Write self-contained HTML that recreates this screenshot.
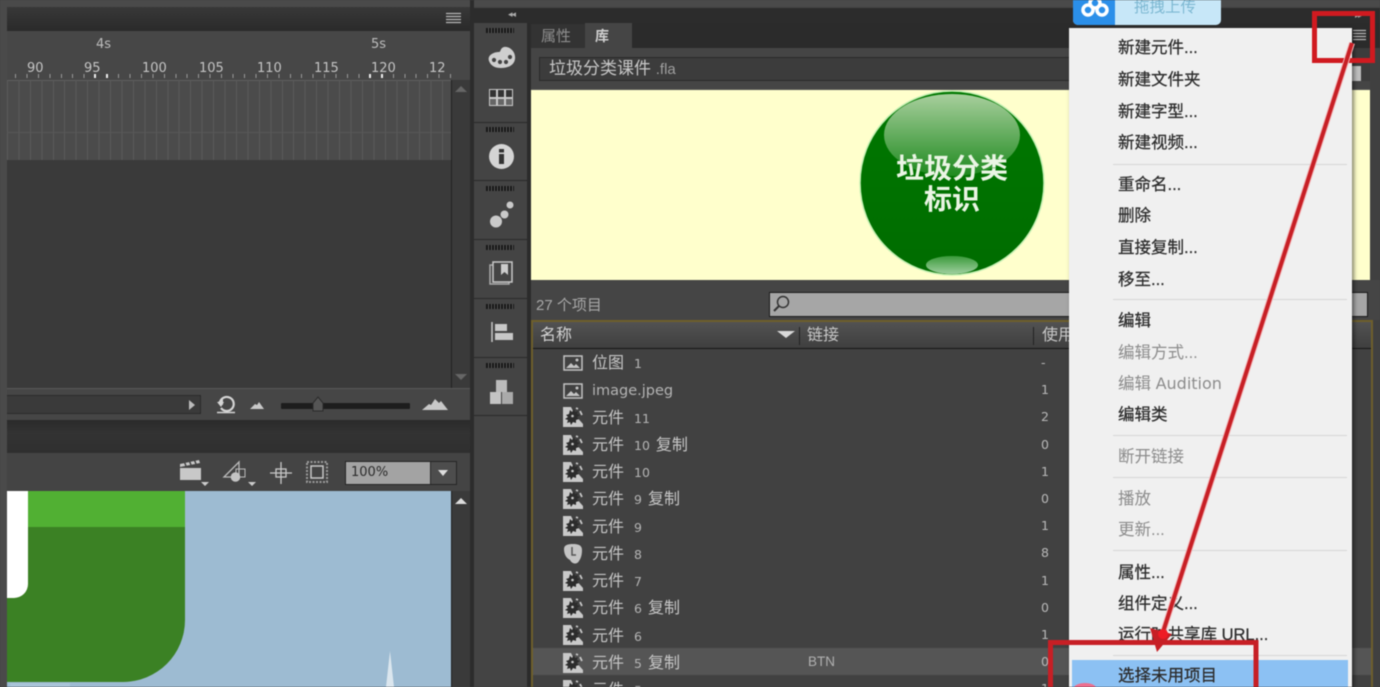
<!DOCTYPE html>
<html><head><meta charset="utf-8">
<style>
html,body{margin:0;padding:0;background:#3f3f3f}
#p{position:relative;width:1380px;height:687px;overflow:hidden;background:#444;font-family:"Liberation Sans","Noto Sans CJK SC",sans-serif;color:#c8c8c8;filter:blur(.4px)}
.a{position:absolute}
.t{position:absolute;white-space:nowrap;line-height:1}
.rul{font-family:"DejaVu Sans",sans-serif;font-size:13px;color:#c4c4c4;top:62px}
.grip{position:absolute;left:486px;width:28px;height:5px;background:repeating-linear-gradient(90deg,#161616 0 2px,#555 2px 3px)}
.sep{position:absolute;left:474px;width:53px;height:1px;background:#2a2a2a}
.rw{position:absolute;left:592px;font-size:16px;color:#c6c6c6;white-space:nowrap;line-height:18px;font-family:"Liberation Sans","Noto Sans CJK SC",sans-serif}
.rw b{font-weight:400;font-family:"DejaVu Sans",sans-serif;font-size:12.5px;color:#b4b4b4;margin:0 6px 0 10px}
.n{position:absolute;left:1041px;font-family:"DejaVu Sans",sans-serif;font-size:12.5px;color:#b8b8b8;line-height:14px}
.ic{position:absolute;left:563px;width:20px;height:20px}
.m{position:absolute;left:1118px;font-size:16.5px;line-height:20px;color:#2c2c2c;white-space:nowrap;-webkit-text-stroke:.25px #2c2c2c}
.d{color:#8c8c8c;-webkit-text-stroke:0}
.s{position:absolute;left:1113px;width:234px;height:1px;background:#d6d6d6}
</style></head><body><div id="p">
<svg width="0" height="0" style="position:absolute">
<defs>
<symbol id="g" viewBox="0 0 20 20"><path d="M0 0H8L12 8 20 17V20H0Z" fill="#c9c9c9"/><path d="M7 3l2 2 2-3 1 3 3-1-1 3 3 1-3 2 2 2-3 1 0 3-3-1-2 3-1-3-3 1 1-3-3-1 3-2-2-2 3-1z" fill="#2c2c2c"/><circle cx="9.500" cy="9" r="1.300" fill="#c9c9c9"/><path d="M13 1L15 2M17 4L19 8" stroke="#c9c9c9" stroke-width="1.800" fill="none"/></symbol>
<symbol id="im" viewBox="0 0 20 16"><rect x="1" y="1" width="18" height="14" fill="none" stroke="#c4c4c4" stroke-width="1.500"/><path d="M3 13L8 8l3 3 2-2 4 4Z" fill="#c4c4c4"/><circle cx="14" cy="5" r="1.500" fill="#c4c4c4"/></symbol>
</defs>
</svg>

<!-- top strip -->
<div class="a" style="left:0;top:0;width:1380px;height:7px;background:#4a4a4a"></div>
<div class="a" style="left:0;top:7px;width:7px;height:680px;background:#4a4a4a"></div>

<!-- timeline panel -->
<div class="a" style="left:7px;top:7px;width:463px;height:24px;background:linear-gradient(#383838,#2a2a2a)"></div>
<svg class="a" style="left:446px;top:12px" width="16" height="13"><path d="M0 1.500H15M0 4.500H15M0 7.500H15M0 10.500H15" stroke="#b9b9b9" stroke-width="1.200"/></svg>
<div class="a" style="left:7px;top:31px;width:463px;height:49px;background:#474747"></div>
<div class="t" style="left:96px;top:38px;font-family:'DejaVu Sans',sans-serif;font-size:13px;color:#bdbdbd">4s</div>
<div class="t" style="left:371px;top:38px;font-family:'DejaVu Sans',sans-serif;font-size:13px;color:#bdbdbd">5s</div>
<div class="t rul" style="left:27px">90</div>
<div class="t rul" style="left:84px">95</div>
<div class="t rul" style="left:142px">100</div>
<div class="t rul" style="left:199px">105</div>
<div class="t rul" style="left:257px">110</div>
<div class="t rul" style="left:314px">115</div>
<div class="t rul" style="left:371px">120</div>
<div class="t rul" style="left:429px">12</div>
<div class="a" style="left:15px;top:74px;width:436px;height:4px;background:repeating-linear-gradient(90deg,#9a9a9a 0 1px,transparent 1px 11.45px)"></div>
<div class="a" style="left:94px;top:74px;width:2px;height:4px;background:#eee"></div>
<div class="a" style="left:106px;top:74px;width:2px;height:4px;background:#eee"></div>
<div class="a" style="left:369px;top:74px;width:2px;height:4px;background:#eee"></div>
<div class="a" style="left:381px;top:74px;width:2px;height:4px;background:#eee"></div>
<div class="a" style="left:7px;top:80px;width:444px;height:1px;background:#5e5e5e"></div>
<div class="a" style="left:7px;top:81px;width:444px;height:79px;background:repeating-linear-gradient(90deg,#5b5b5b 0 1px,#4b4b4b 1px 11.45px)"></div>
<div class="a" style="left:7px;top:132px;width:444px;height:1px;background:#575757"></div>
<div class="a" style="left:7px;top:160px;width:463px;height:228px;background:#3a3a3a"></div>
<div class="a" style="left:451px;top:80px;width:19px;height:308px;background:#3a3a3a;border-left:1px solid #222;box-sizing:border-box"></div>
<div class="a" style="left:455px;top:86px;width:0;height:0;border:6px solid transparent;border-bottom:6px solid #666;border-top:0"></div>
<div class="a" style="left:455px;top:374px;width:0;height:0;border:6px solid transparent;border-top:6px solid #666;border-bottom:0"></div>

<!-- controls -->
<div class="a" style="left:7px;top:388px;width:463px;height:32px;background:#464646;border-top:1px solid #585858;box-sizing:border-box"></div>
<div class="a" style="left:7px;top:395px;width:194px;height:19px;background:#3a3a3a;border:1px solid #2a2a2a;border-left:0;box-sizing:border-box"></div>
<div class="a" style="left:189px;top:400px;width:0;height:0;border:5px solid transparent;border-left:6px solid #bbb;border-right:0"></div>
<svg class="a" style="left:214px;top:394px" width="26" height="22"><path d="M6 8a7 7 0 1 1 1 6" fill="none" stroke="#d4d4d4" stroke-width="2.200"/><path d="M3 8h7l-3 5z M9 5v6l-5-3z" fill="#d4d4d4"/><path d="M3 18.500H21" stroke="#d4d4d4" stroke-width="1.500"/></svg>
<svg class="a" style="left:249px;top:400px" width="16" height="10"><path d="M1 9L6 4 8 5 10 2 15 9Z" fill="#c8c8c8"/></svg>
<div class="a" style="left:281px;top:403px;width:129px;height:6px;background:#1d1d1d;border-radius:1px"></div>
<svg class="a" style="left:311px;top:396px" width="14" height="17"><path d="M2 15V7L7 1 12 7V15Z" fill="#555" stroke="#2a2a2a"/></svg>
<svg class="a" style="left:421px;top:398px" width="28" height="14"><path d="M1 12L8 6 10 7 14 1 18 5 20 3 27 12Z" fill="#c8c8c8"/></svg>

<div class="a" style="left:7px;top:420px;width:463px;height:33px;background:linear-gradient(#2a2a2a,#333 40%,#2f2f2f)"></div>
<div class="a" style="left:7px;top:453px;width:463px;height:38px;background:#444"></div>
<svg class="a" style="left:178px;top:459px" width="34" height="28"><path d="M2 9H23V21H2Z" fill="#c8c8c8"/><path d="M2 8L22 4 21 1 2 5Z" fill="#c8c8c8"/><path d="M6 2l2 5M11 1l2 5M16 0l2 5" stroke="#444" stroke-width="1.500"/><path d="M23 23h8l-4 4z" fill="#ccc"/></svg>
<svg class="a" style="left:222px;top:459px" width="38" height="28"><path d="M2 18L17 3V18Z" fill="none" stroke="#bbb" stroke-width="1.300"/><rect x="14" y="10" width="9" height="8" fill="none" stroke="#bbb"/><circle cx="13.500" cy="18" r="4.800" fill="#c4c4c4"/><path d="M26 23h8l-4 4z" fill="#ccc"/></svg>
<svg class="a" style="left:269px;top:461px" width="24" height="24"><path d="M1 12H23M12 1V23" stroke="#c8c8c8" stroke-width="1.300"/><rect x="7" y="8" width="10" height="8" fill="none" stroke="#c8c8c8" stroke-width="1.300"/></svg>
<svg class="a" style="left:306px;top:461px" width="22" height="22"><rect x="1" y="1" width="20" height="20" fill="none" stroke="#9a9a9a" stroke-width="2" stroke-dasharray="2 1.500"/><rect x="5" y="5" width="12" height="12" fill="none" stroke="#c8c8c8" stroke-width="1.500"/></svg>
<div class="a" style="left:345px;top:461px;width:112px;height:24px;background:#a3a3a3;border:1px solid #262626;box-sizing:border-box"></div>
<div class="t" style="left:351px;top:466px;font-family:'DejaVu Sans',sans-serif;font-size:13px;color:#2c2c2c">100%</div>
<div class="a" style="left:430px;top:462px;width:26px;height:22px;background:#4d4d4d;border-left:1px solid #2a2a2a;box-sizing:border-box"></div>
<div class="a" style="left:438px;top:470px;width:0;height:0;border:5px solid transparent;border-top:6px solid #ddd;border-bottom:0"></div>

<!-- stage -->
<div class="a" style="left:7px;top:491px;width:444px;height:196px;background:#9dbbd2;overflow:hidden">
 <div class="a" style="left:-40px;top:-30px;width:218px;height:221px;background:#3b8124;border-radius:0 0 62px 0"></div>
 <div class="a" style="left:0;top:0;width:178px;height:36px;background:#51b033"></div>
 <div class="a" style="left:-30px;top:-10px;width:51px;height:117px;background:#fff;border-radius:0 0 14px 0"></div>
 <div class="a" style="left:3px;top:192px;width:60px;height:4px;background:#a9c4d8"></div>
 <svg class="a" style="left:376px;top:160px" width="14" height="36"><path d="M7 0L3 36H11Z" fill="#dbe6ee"/></svg>
</div>
<div class="a" style="left:451px;top:491px;width:19px;height:196px;background:#3a3a3a;border-left:1px solid #222;box-sizing:border-box"></div>
<div class="a" style="left:455px;top:498px;width:0;height:0;border:6px solid transparent;border-bottom:6px solid #ddd;border-top:0"></div>

<!-- dock -->
<div class="a" style="left:470px;top:0;width:4px;height:687px;background:#2c2c2c"></div>
<div class="a" style="left:474px;top:8px;width:906px;height:15px;background:#2c2c2c"></div>
<div class="t" style="left:508px;top:10px;font-size:9px;color:#aaa;letter-spacing:-1px">◂◂</div>
<div class="a" style="left:474px;top:23px;width:53px;height:664px;background:#444"></div>
<div class="a" style="left:527px;top:23px;width:4px;height:664px;background:#2b2b2b"></div>
<div class="grip" style="top:28px"></div><div class="grip" style="top:127px"></div><div class="grip" style="top:186px"></div><div class="grip" style="top:245px"></div><div class="grip" style="top:304px"></div><div class="grip" style="top:363px"></div>
<div class="sep" style="top:122px"></div><div class="sep" style="top:180px"></div><div class="sep" style="top:239px"></div><div class="sep" style="top:298px"></div><div class="sep" style="top:357px"></div><div class="sep" style="top:415px"></div>
<svg class="a" style="left:487px;top:46px" width="30" height="24"><path d="M2 15C0 9 7 6 12 6 14 6 13 2 17 1 23 0 29 6 28 13 27 20 20 22 14 22 8 22 4 20 2 15Z" fill="#cfcfcf"/><circle cx="7" cy="14" r="2.100" fill="#444"/><circle cx="13" cy="16" r="2.100" fill="#444"/><circle cx="19" cy="16" r="2.100" fill="#444"/><circle cx="23" cy="11" r="2.100" fill="#444"/></svg>
<svg class="a" style="left:489px;top:89px" width="24" height="17"><rect width="24" height="17" fill="#c8c8c8"/><g fill="#333"><rect x="1" y="1" width="6" height="7"/><rect x="9" y="1" width="6" height="7"/><rect x="17" y="1" width="6" height="7"/></g><g fill="#666"><rect x="1" y="10" width="6" height="6"/><rect x="9" y="10" width="6" height="6"/><rect x="17" y="10" width="6" height="6"/></g></svg>
<svg class="a" style="left:489px;top:144px" width="25" height="25"><circle cx="12.500" cy="12.500" r="12.500" fill="#d4d4d4"/><rect x="10" y="10" width="5" height="10" fill="#333"/><rect x="10" y="5" width="5" height="3.500" fill="#333"/></svg>
<svg class="a" style="left:489px;top:200px" width="26" height="28"><circle cx="7" cy="21.500" r="6" fill="#c9c9c9"/><circle cx="15.500" cy="14.500" r="4" fill="#c9c9c9"/><circle cx="21" cy="5" r="3.500" fill="#c9c9c9"/></svg>
<svg class="a" style="left:489px;top:261px" width="24" height="24"><path d="M1 4H20V23H1Z" fill="none" stroke="#aaa" stroke-width="1.500"/><path d="M4 1H23V21H4Z" fill="#444" stroke="#c8c8c8" stroke-width="1.500"/><path d="M12 3H19V14L15.500 11 12 14Z" fill="#ccc"/></svg>
<svg class="a" style="left:491px;top:320px" width="22" height="24"><path d="M1 2V22" stroke="#c8c8c8" stroke-width="1.500"/><rect x="4" y="4" width="12" height="7" fill="#c8c8c8"/><rect x="4" y="13" width="18" height="7" fill="#c8c8c8"/></svg>
<svg class="a" style="left:489px;top:379px" width="25" height="26"><rect x="7" y="1" width="11" height="12" fill="#bbb"/><rect x="1" y="13" width="11" height="12" fill="#c4c4c4"/><rect x="13" y="13" width="11" height="12" fill="#aaa"/></svg>

<!-- right panel -->
<div class="a" style="left:531px;top:23px;width:849px;height:25px;background:#2b2b2b"></div>
<div class="a" style="left:531px;top:48px;width:849px;height:41px;background:#454545"></div>
<div class="a" style="left:531px;top:24px;width:54px;height:24px;background:#333"></div>
<div class="a" style="left:585px;top:23px;width:47px;height:25px;background:#454545"></div>
<div class="t" style="left:541px;top:29px;font-size:15px;color:#8e8e8e">属性</div>
<div class="t" style="left:595px;top:29px;font-size:14px;color:#cfcfcf;font-weight:700">库</div>
<div class="a" style="left:539px;top:57px;width:830px;height:24px;background:#3c3c3c;border:1px solid #2a2a2a;box-sizing:border-box"></div>
<div class="t" style="left:549px;top:60px;font-size:17px;color:#c8c8c8">垃圾分类课件 <span style="font-size:15px;color:#9f9f9f">.fla</span></div>
<div class="a" style="left:531px;top:89px;width:839px;height:191px;background:#ffffcc;border-top:1px solid #555;box-sizing:border-box"></div>
<div class="a" style="left:1370px;top:48px;width:10px;height:639px;background:#404040"></div>

<!-- ball -->
<svg class="a" style="left:855px;top:87px" width="194" height="194">
<defs>
<linearGradient id="gl" x1="0" y1="0" x2="0" y2="1"><stop offset="0" stop-color="#a8cf9d"/><stop offset="1" stop-color="#1f8a1f"/></linearGradient>
<linearGradient id="gb" x1="0" y1="0" x2="0" y2="1"><stop offset="0" stop-color="#007800"/><stop offset="1" stop-color="#006c00"/></linearGradient>
<linearGradient id="gf" x1="0" y1="0" x2="0" y2="1"><stop offset="0" stop-color="#3a9a3a"/><stop offset="1" stop-color="#9fd09f"/></linearGradient>
</defs>
<circle cx="97" cy="96" r="92" fill="url(#gb)" stroke="#c6f0b4" stroke-width="1.500"/>
<ellipse cx="97" cy="48" rx="68" ry="41" fill="url(#gl)"/>
<ellipse cx="97" cy="178" rx="26" ry="9" fill="url(#gf)"/>
</svg>
<div class="t" style="left:896px;top:155px;font-size:28px;font-weight:700;color:#eaf5e4">垃圾分类</div>
<div class="t" style="left:924px;top:186px;font-size:28px;font-weight:700;color:#eaf5e4">标识</div>

<!-- search / list -->
<div class="a" style="left:531px;top:280px;width:849px;height:40px;background:#454545"></div>
<div class="t" style="left:536px;top:298px;font-size:15px;color:#a8a8a8">27 个项目</div>
<div class="a" style="left:769px;top:292px;width:599px;height:25px;background:#a6a6a6;border:1px solid #1c1c1c;box-sizing:border-box"></div>
<svg class="a" style="left:772px;top:294px" width="20" height="20"><circle cx="11" cy="8" r="5.500" fill="none" stroke="#333" stroke-width="1.500"/><path d="M7 12L2 17" stroke="#333" stroke-width="2"/></svg>
<div class="a" style="left:531px;top:320px;width:842px;height:367px;background:#414141;border:2px solid #6e5f2b;border-bottom:0;box-sizing:border-box"></div>
<div class="a" style="left:533px;top:322px;width:838px;height:27px;background:linear-gradient(#525252,#3f3f3f);border-bottom:1px solid #161616;box-sizing:border-box"></div>
<div class="t" style="left:540px;top:328px;font-size:16px;color:#d2d2d2">名称</div>
<div class="a" style="left:777px;top:331px;width:0;height:0;border:9px solid transparent;border-top:7px solid #d8d8d8;border-bottom:0"></div>
<div class="a" style="left:799px;top:327px;width:1px;height:18px;background:#222"></div>
<div class="t" style="left:807px;top:328px;font-size:16px;color:#c8c8c8">链接</div>
<div class="a" style="left:1033px;top:327px;width:1px;height:18px;background:#222"></div>
<div class="t" style="left:1042px;top:328px;font-size:16px;color:#c8c8c8">使用</div>
<div class="a" style="left:533px;top:648px;width:838px;height:27px;background:#555"></div>

<svg class="ic" style="top:355px;height:16px"><use href="#im"/></svg>
<svg class="ic" style="top:383px;height:16px"><use href="#im"/></svg>
<svg class="ic" style="top:407px"><use href="#g"/></svg>
<svg class="ic" style="top:435px"><use href="#g"/></svg>
<svg class="ic" style="top:462px"><use href="#g"/></svg>
<svg class="ic" style="top:489px"><use href="#g"/></svg>
<svg class="ic" style="top:516px"><use href="#g"/></svg>
<svg class="ic" style="top:544px" viewBox="0 0 20 20"><path d="M1 5C1 1 5 0 10 0S19 1 19 6C19 11 18 14 16 17 14 21 9 20 7 16 3 14 1 10 1 5Z" fill="#c4c4c4"/><path d="M9 3V11H13" fill="none" stroke="#555" stroke-width="1.500"/></svg>
<svg class="ic" style="top:571px"><use href="#g"/></svg>
<svg class="ic" style="top:598px"><use href="#g"/></svg>
<svg class="ic" style="top:625px"><use href="#g"/></svg>
<svg class="ic" style="top:653px"><use href="#g"/></svg>
<svg class="ic" style="top:680px"><use href="#g"/></svg>

<div class="rw" style="top:355px">位图<b>1</b></div>
<div class="rw" style="top:382px;font-size:14.500px;font-family:'DejaVu Sans',sans-serif;color:#b4b4b4">image.jpeg</div>
<div class="rw" style="top:410px">元件<b>11</b></div>
<div class="rw" style="top:437px">元件<b>10</b>复制</div>
<div class="rw" style="top:464px">元件<b>10</b></div>
<div class="rw" style="top:491px">元件<b>9</b>复制</div>
<div class="rw" style="top:519px">元件<b>9</b></div>
<div class="rw" style="top:546px">元件<b>8</b></div>
<div class="rw" style="top:573px">元件<b>7</b></div>
<div class="rw" style="top:600px">元件<b>6</b>复制</div>
<div class="rw" style="top:628px">元件<b>6</b></div>
<div class="rw" style="top:655px">元件<b>5</b>复制</div>
<div class="rw" style="top:682px">元件<b>5</b></div>
<div class="t" style="left:808px;top:655px;font-size:13.500px;color:#b0b0b0">BTN</div>

<div class="n" style="top:356px">-</div><div class="n" style="top:383px">1</div><div class="n" style="top:410px">2</div><div class="n" style="top:438px">0</div><div class="n" style="top:465px">1</div><div class="n" style="top:492px">0</div><div class="n" style="top:519px">1</div><div class="n" style="top:546px">8</div><div class="n" style="top:574px">1</div><div class="n" style="top:601px">0</div><div class="n" style="top:628px">1</div><div class="n" style="top:655px">0</div><div class="n" style="top:682px">1</div>

<div class="a" style="left:1343px;top:48px;width:27px;height:33px;background:#3c3c3c"></div>
<div class="a" style="left:1352px;top:66px;width:9px;height:15px;background:#bdbdbd"></div>
<svg class="a" style="left:1352px;top:29px" width="16" height="14"><path d="M1 1.500H14M1 4.500H14M1 7.500H14M1 10.500H14" stroke="#b9b9b9" stroke-width="1.200"/></svg>
<div class="t" style="left:1355px;top:12px;font-size:8px;color:#aaa;letter-spacing:-1px">▸▸</div>

<!-- upload button -->
<div class="a" style="left:1073px;top:0;width:148px;height:25px;background:#c7e7f8;border-radius:0 0 5px 5px;overflow:hidden"><div class="a" style="left:0;top:0;width:42px;height:25px;background:#2b8fe9"></div></div>
<svg class="a" style="left:1080px;top:0" width="30" height="18"><g fill="none" stroke="#fff" stroke-width="3.500"><circle cx="15" cy="3" r="5"/><circle cx="8" cy="10" r="5"/><circle cx="22" cy="10" r="5"/></g></svg>
<div class="t" style="left:1134px;top:0;font-size:15.500px;color:#7db8d2">拖拽上传</div>

<!-- menu -->
<div class="a" style="left:1069px;top:28px;width:283px;height:670px;background:#f0f0f0;box-shadow:2px 2px 4px rgba(0,0,0,.5)"></div>
<div class="m" style="top:38px">新建元件...</div>
<div class="m" style="top:70px">新建文件夹</div>
<div class="m" style="top:102px">新建字型...</div>
<div class="m" style="top:133px">新建视频...</div>
<div class="s" style="top:164px"></div>
<div class="m" style="top:175px">重命名...</div>
<div class="m" style="top:206px">删除</div>
<div class="m" style="top:238px">直接复制...</div>
<div class="m" style="top:270px">移至...</div>
<div class="s" style="top:299px"></div>
<div class="m" style="top:311px">编辑</div>
<div class="m d" style="top:343px">编辑方式...</div>
<div class="m d" style="top:374px">编辑 <span style="font-family:'DejaVu Sans',sans-serif;font-size:16px">Audition</span></div>
<div class="m" style="top:405px">编辑类</div>
<div class="s" style="top:435px"></div>
<div class="m d" style="top:447px">断开链接</div>
<div class="s" style="top:477px"></div>
<div class="m d" style="top:489px">播放</div>
<div class="m d" style="top:520px">更新...</div>
<div class="s" style="top:550px"></div>
<div class="m" style="top:563px">属性...</div>
<div class="m" style="top:594px">组件定义...</div>
<div class="m" style="top:625px">运行时共享库 URL...</div>
<div class="s" style="top:655px"></div>
<div class="a" style="left:1072px;top:660px;width:276px;height:27px;background:#8cc1f3"></div>
<div class="m" style="top:666px">选择未用项目</div>

<!-- annotations -->
<svg class="a" style="left:0;top:0" width="1380" height="687">
<rect x="1314.500" y="13.500" width="58" height="47" fill="none" stroke="#d01a20" stroke-width="5"/>
<path d="M1352 43L1163 632" stroke="#f4b6b8" stroke-width="6"/>
<path d="M1352 43L1163 632" stroke="#c71f25" stroke-width="4"/>
<path d="M1157 652L1150 628 1172 634Z" fill="#c71f25"/>
<path d="M1050.500 690V642.500H1256V690" fill="none" stroke="#c71f25" stroke-width="5"/>
<circle cx="1163" cy="634" r="5" fill="#ee1c25"/>
<ellipse cx="1085" cy="688" rx="11" ry="5" fill="#ee6f8f"/>
</svg>
</div></body></html>
